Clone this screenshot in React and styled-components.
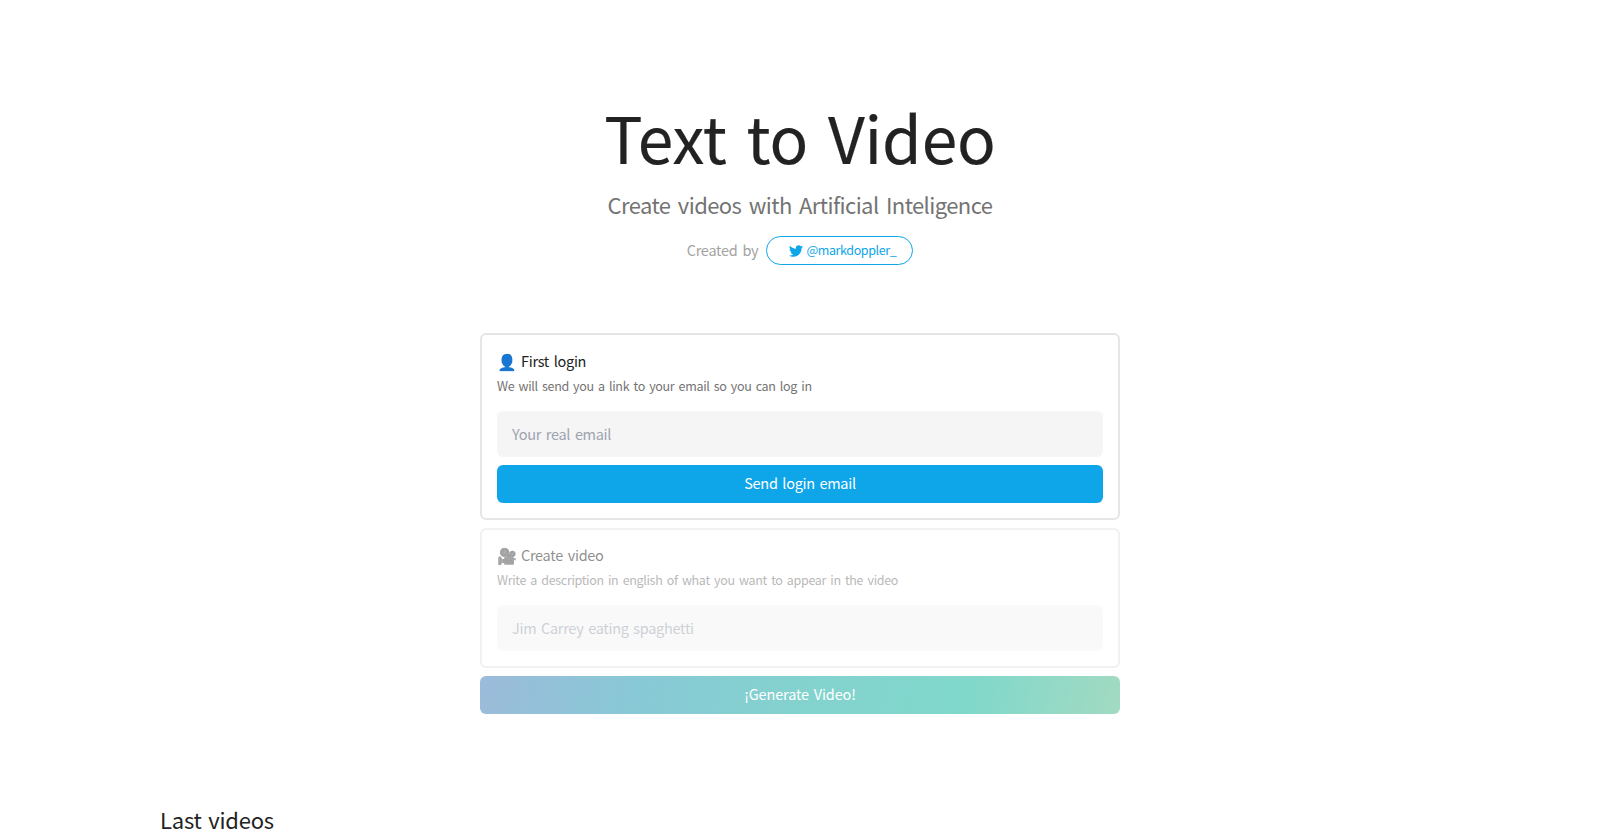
import React from 'react';
import styled, { createGlobalStyle } from 'styled-components';
import { FaTwitter } from 'react-icons/fa';

const Global = createGlobalStyle`
  *, *::before, *::after { box-sizing: border-box; }
  body {
    margin: 0;
    background: #fff;
    color: #222;
    overflow: hidden;
    font: 14.5px/24px "Noto Sans CJK JP", "Open Sans", sans-serif;
    letter-spacing: -0.3px;
    word-spacing: 1.8px;
  }
  h1, h2, p { margin: 0; font-weight: 400; }
  button, input { font: inherit; letter-spacing: inherit; word-spacing: inherit; border: 0; }
`;

const Page = styled.main`
  height: 834px;
  padding-top: 104px;
  overflow: hidden;
`;

const Header = styled.header`
  display: flex;
  flex-direction: column;
  align-items: center;
`;

const Title = styled.h1`
  font-size: 64px;
  line-height: 64px;
  letter-spacing: -0.1px;
  word-spacing: 5.5px;
  -webkit-text-stroke: 0.2px currentColor;
`;

const Subtitle = styled.p`
  margin-top: 20px;
  font-size: 22px;
  line-height: 32px;
  letter-spacing: -0.58px;
  word-spacing: 3px;
  color: #737373;
`;

const Credit = styled.div`
  margin-top: 16px;
  height: 29px;
  display: flex;
  align-items: center;
  gap: 8px;
  color: #a3a3a3;
`;

const CreditLabel = styled.span`
  padding-bottom: 2px;
  letter-spacing: -0.25px;
`;

const Handle = styled.a`
  display: flex;
  align-items: center;
  gap: 3px;
  width: 147px;
  height: 29px;
  padding: 0 0 2px 22px;
  border: 1px solid #0ea5e9;
  border-radius: 15px;
  color: #0ea5e9;
  font-size: 12.5px;
  letter-spacing: -0.4px;

  svg { flex: none; margin-top: 3px; }
`;

const Form = styled.section`
  width: 640px;
  margin: 68px auto 0;
  display: flex;
  flex-direction: column;
  gap: 8px;
`;

const Card = styled.div`
  display: flex;
  flex-direction: column;
  padding: ${(p) => (p.$disabled ? 14 : 15)}px 15px 15px;
  border: 2px solid #e5e5e5;
  border-radius: 6px;
  opacity: ${(p) => (p.$disabled ? 0.5 : 1)};
`;

const CardTitle = styled.h2`
  display: flex;
  align-items: center;
  gap: 5px;
  font-size: 14.5px;
  line-height: 22px;
`;

const Emoji = styled.span`
  width: 19px;
  font-size: 16px;
  letter-spacing: 0;
`;

const Hint = styled.p`
  margin-top: 4px;
  font-size: 12.5px;
  line-height: 20px;
  letter-spacing: -0.33px;
  color: #737373;
`;

const Input = styled.input`
  margin-top: 15px;
  height: 46px;
  padding: 0 15px 1px;
  border-radius: 6px;
  background: #f5f5f5;

  &::placeholder { color: #9ca3af; opacity: 1; }
`;

const Button = styled.button`
  height: 38px;
  padding: 0 0 2px;
  border-radius: 6px;
  color: #fff;
  background: #0ea5e9;
`;

const LoginButton = styled(Button)`
  margin-top: 8px;
`;

const GenerateButton = styled(Button)`
  letter-spacing: -0.15px;
  background: linear-gradient(100deg, #9cbbda, #88c9d6 25%, #83d2ce 50%, #80d8cb 76%, #a2dac2);
`;

const SectionTitle = styled.h2`
  margin: 89px 0 0 160px;
  font-size: 22px;
  line-height: 32px;
  letter-spacing: -0.2px;
`;

export default function App() {
  return (
    <Page>
      <Global />
      <Header>
        <Title>Text to Video</Title>
        <Subtitle>Create videos with Artificial Inteligence</Subtitle>
        <Credit>
          <CreditLabel>Created by</CreditLabel>
          <Handle><FaTwitter size={14} />@markdoppler_</Handle>
        </Credit>
      </Header>
      <Form>
        <Card>
          <CardTitle><Emoji>👤</Emoji>First login</CardTitle>
          <Hint>We will send you a link to your email so you can log in</Hint>
          <Input placeholder="Your real email" />
          <LoginButton>Send login email</LoginButton>
        </Card>
        <Card $disabled>
          <CardTitle><Emoji>🎥</Emoji>Create video</CardTitle>
          <Hint>Write a description in english of what you want to appear in the video</Hint>
          <Input placeholder="Jim Carrey eating spaghetti" disabled />
        </Card>
        <GenerateButton>¡Generate Video!</GenerateButton>
      </Form>
      <SectionTitle>Last videos</SectionTitle>
    </Page>
  );
}
